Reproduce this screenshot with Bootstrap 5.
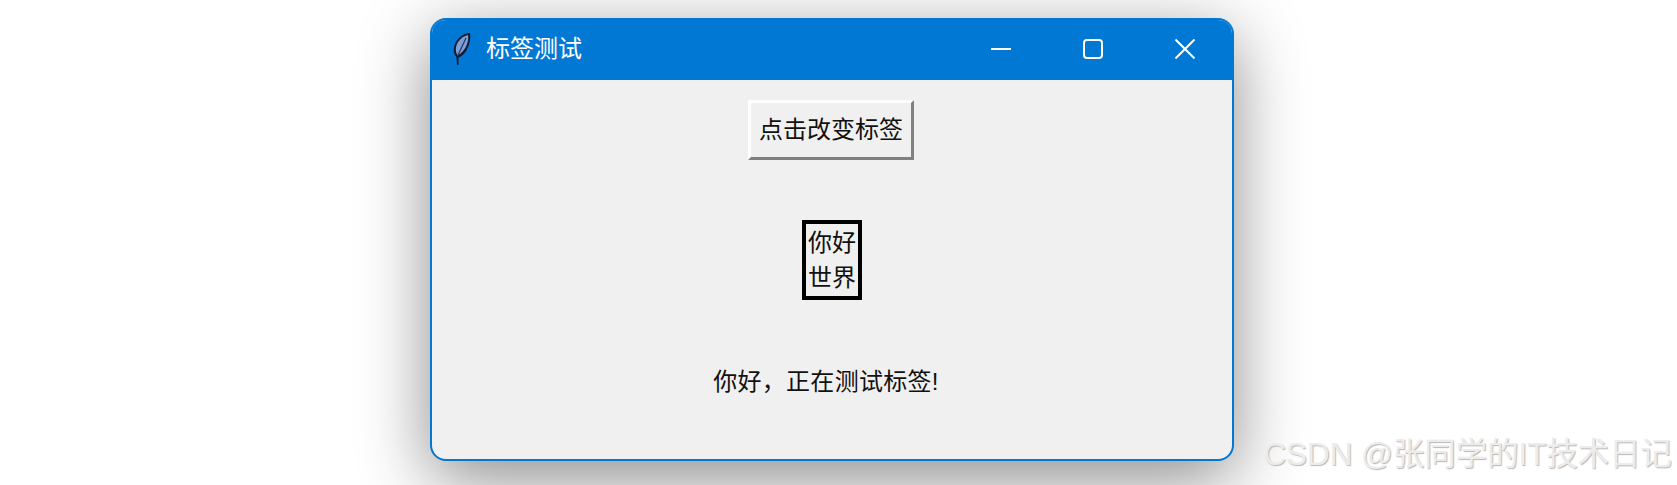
<!DOCTYPE html>
<html lang="zh-CN">
<head>
  <meta charset="UTF-8">
  <meta name="viewport" content="width=device-width, initial-scale=1.0">
  <title>标签测试</title>
  <link href="https://cdn.jsdelivr.net/npm/bootstrap@5.3.2/dist/css/bootstrap.min.css" rel="stylesheet">
  <style>
    html, body {
      height: 485px;
      overflow: hidden;
    }
    body {
      background: #fff;
      font-family: "Liberation Sans", "Noto Sans CJK SC", sans-serif;
      padding: 18px 0 0 430px;
      position: relative;
    }
    .tk-window {
      width: 804px;
      height: 443px;
      border: 2px solid #0078d4;
      border-radius: 16px;
      background: #f0f0f0;
      overflow: hidden;
      box-shadow: 0 18px 70px rgba(0, 0, 0, .46);
    }
    .tk-titlebar {
      height: 62px;
      margin: -2px -2px 0;
      background: #0078d4;
      color: #fff;
      font-size: 24px;
      padding-left: 22px;
    }
    .tk-title {
      margin-left: 14px;
      line-height: 62px;
    }
    .tk-ctrl {
      width: 92px;
      height: 60px;
    }
    .tk-ctrls {
      padding-right: 3px;
    }
    .tk-body {
      color: #111;
      font-size: 24px;
    }
    .tk-button {
      width: 166px;
      height: 60px;
      margin-top: 20px;
      margin-right: 2px;
      padding: 0;
      font-size: 24px;
      color: #111;
      background: #f0f0f0;
      border-style: solid;
      border-width: 3px;
      border-color: #fff #808080 #808080 #fff;
      border-radius: 0;
    }
    .tk-label {
      width: 60px;
      height: 80px;
      margin-top: 60px;
      padding-top: 1px;
      border: 4px solid #000;
      line-height: 35px;
      text-align: center;
      white-space: nowrap;
    }
    .tk-message {
      margin-top: 64px;
      margin-right: 12px;
      line-height: 36px;
      letter-spacing: .3px;
    }
    .csdn-mark {
      position: absolute;
      right: 5px;
      top: 435px;
      font-size: 31.4px;
      line-height: 40px;
      color: #ececec;
      text-shadow: 1px 1px 1px #b8b8b8;
      white-space: nowrap;
    }
  </style>
</head>
<body>

  <div class="tk-window d-flex flex-column">
    <div class="tk-titlebar d-flex align-items-center justify-content-between flex-shrink-0">
      <div class="d-flex align-items-center">
        <svg width="20" height="34" viewBox="0 0 20 34" aria-hidden="true">
          <path d="M5 33 L4.4 25 C0.6 21 1.2 14 4.8 8.5 C8 4 13 1.2 18 1 C19 6 17.6 13 14.4 18.5 C12 22.4 9 25 6.4 25.6 L6.6 33 Z" fill="#141c30"/>
          <path d="M5.4 23 C3 19.6 3.4 14 6.4 9.6 C9 6 12.4 4 16 3 C16.8 7.5 15.2 13 12.6 17 C10.6 20 8 22.4 5.4 23 Z" fill="#7f9fd8"/>
          <path d="M5.6 24 L14 6" stroke="#2a3a60" stroke-width="1.3" fill="none"/>
        </svg>
        <span class="tk-title">标签测试</span>
      </div>
      <div class="tk-ctrls d-flex">
        <div class="tk-ctrl d-flex align-items-center justify-content-center">
          <svg width="20" height="20" viewBox="0 0 20 20" aria-hidden="true"><path d="M0 10H20" stroke="#fff" stroke-width="2"/></svg>
        </div>
        <div class="tk-ctrl d-flex align-items-center justify-content-center">
          <svg width="20" height="20" viewBox="0 0 20 20" aria-hidden="true"><rect x="1" y="1" width="18" height="18" rx="3" fill="none" stroke="#fff" stroke-width="2"/></svg>
        </div>
        <div class="tk-ctrl d-flex align-items-center justify-content-center">
          <svg width="20" height="20" viewBox="0 0 20 20" aria-hidden="true"><path d="M0.5 0.5L19.5 19.5M19.5 0.5L0.5 19.5" stroke="#fff" stroke-width="2"/></svg>
        </div>
      </div>
    </div>
    <div class="tk-body d-flex flex-column align-items-center flex-grow-1">
      <button type="button" class="tk-button">点击改变标签</button>
      <div class="tk-label">你好<br>世界</div>
      <div class="tk-message">你好，正在测试标签!</div>
    </div>
  </div>

  <div class="csdn-mark">CSDN @张同学的IT技术日记</div>

</body>
</html>
